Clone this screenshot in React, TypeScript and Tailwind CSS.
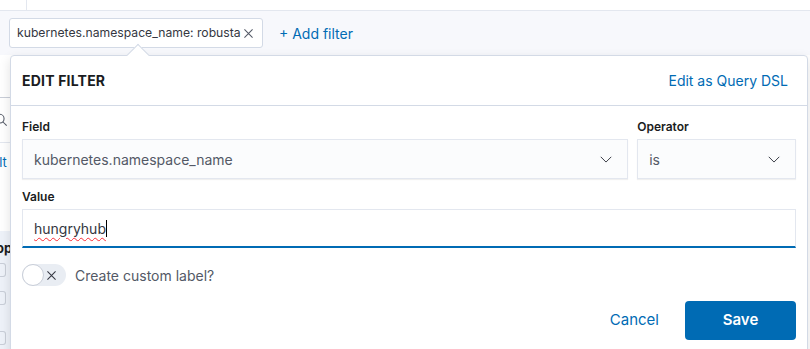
import React from "react";

const Chevron = () => (
  <svg width="14" height="14" viewBox="0 0 16 16" fill="none">
    <path d="M2 5.5l6 6 6-6" stroke="#343741" strokeWidth="1.1" />
  </svg>
);

const Cross = ({ size = 12, color = "#343741" }: { size?: number; color?: string }) => (
  <svg width={size} height={size} viewBox="0 0 16 16" fill="none">
    <path d="M3 3l10 10M13 3L3 13" stroke={color} strokeWidth="1.3" />
  </svg>
);

export default function App() {
  return (
    <div
      className="relative w-[810px] h-[349px] overflow-hidden bg-white text-[#343741]"
      style={{ fontFamily: "Inter, 'Noto Sans', sans-serif" }}
    >
      {/* top strip */}
      <div className="h-[11px] border-b border-[#e3e7ef] flex">
        <div className="w-[27px] border-r border-[#e3e7ef]" />
      </div>
      {/* filter bar */}
      <div className="h-[44px] bg-[#f7f8fc] flex items-center gap-[16px] pl-[9px]">
        <div className="h-[30px] w-[254px] bg-white border border-[#d3dae6] rounded-[3px] flex items-center pl-[7px] pr-[7px] justify-between text-[12.2px] text-[#343741] whitespace-nowrap">
          <span>kubernetes.namespace_name: robusta</span>
          <Cross size={13} color="#535966" />
        </div>
        <span className="text-[14px] text-[#006bb4]">+ Add filter</span>
      </div>
      {/* left sidebar remnants */}
      <div className="w-[10px] flex flex-col">
        <div className="h-[43px] border-b border-[#c9ced8]" />
        <div className="h-[45px] flex items-center border-b border-[#e3e7ef]">
          <svg width="14" height="14" viewBox="0 0 16 16" fill="none" className="-ml-[6px]">
            <circle cx="6.5" cy="6.5" r="5" stroke="#535966" strokeWidth="1.2" />
            <path d="M10 10l4.5 4.5" stroke="#535966" strokeWidth="1.2" />
          </svg>
        </div>
        <div className="h-[40px] flex items-center text-[13px] text-[#006bb4] overflow-hidden">
          <span className="-ml-[4px]">ilt</span>
        </div>
        <div className="h-[48px]" />
        <div className="h-[130px] bg-[#eef2f9] flex flex-col pt-[8px] overflow-hidden">
          <span className="text-[13px] font-bold -ml-[4px] text-[#1a1c21]">op</span>
          <div className="mt-[4px] h-[14px] w-[6px] border border-[#c9ced8] rounded-r-[3px] border-l-0" />
          <div className="mt-[14px] h-[14px] w-[6px] border border-[#c9ced8] rounded-r-[3px] border-l-0" />
          <div className="mt-[26px] h-[14px] w-[6px] border border-[#c9ced8] rounded-r-[3px] border-l-0" />
        </div>
      </div>

      {/* popover arrow */}
      <div className="absolute left-[130px] top-[47px] w-[16px] h-[16px] rotate-45 bg-white border-l border-t border-[#d3dae6] z-20" />
      {/* popover */}
      <div className="absolute left-[10px] top-[55px] w-[798px] h-[310px] bg-white border border-[#d3dae6] rounded-[4px] shadow-[0_4px_12px_rgba(0,0,0,0.12)] z-10">
        <div className="h-[50px] border-b border-[#d3dae6] flex items-center justify-between px-[11px]">
          <span className="text-[14px] font-bold tracking-[0.2px] text-[#1a1c21]">EDIT FILTER</span>
          <span className="text-[14px] text-[#006bb4] pr-[8px]">Edit as Query DSL</span>
        </div>
        <div className="px-[11px] pt-[12px]">
          <div className="flex gap-[9px]">
            <div className="flex flex-col w-[607px]">
              <span className="text-[12px] font-semibold h-[21px] text-[#1a1c21]">Field</span>
              <div className="h-[40px] bg-[#fbfcfd] border border-[#e3e7ef] shadow-[0_1px_1px_rgba(0,0,0,0.06)] flex items-center justify-between pl-[11px] pr-[14px] text-[14px] text-[#535966]">
                <span>kubernetes.namespace_name</span>
                <Chevron />
              </div>
            </div>
            <div className="flex flex-col w-[159px]">
              <span className="text-[12px] font-semibold h-[21px] text-[#1a1c21]">Operator</span>
              <div className="h-[40px] bg-[#fbfcfd] border border-[#e3e7ef] shadow-[0_1px_1px_rgba(0,0,0,0.06)] flex items-center justify-between pl-[11px] pr-[14px] text-[14px] text-[#535966]">
                <span>is</span>
                <Chevron />
              </div>
            </div>
          </div>
          <div className="flex flex-col mt-[9px]">
            <span className="text-[12px] font-semibold h-[21px] text-[#1a1c21]">Value</span>
            <div className="h-[39px] bg-white border border-[#e3e7ef] border-b-2 border-b-[#006bb4] flex items-center pl-[11px] text-[14px] text-[#343741]">
              <span className="underline decoration-wavy decoration-red-500 decoration-[1px] underline-offset-[3px]">hungryhub</span>
              <span className="w-px h-[17px] bg-black" />
            </div>
          </div>
          <div className="flex items-center gap-[9px] mt-[16px]">
            <div className="w-[44px] h-[22px] rounded-full bg-[#e9edf3] flex items-center justify-between pr-[8px]">
              <div className="w-[22px] h-[22px] rounded-full bg-white border border-[#c9ced8]" />
              <Cross size={13} color="#343741" />
            </div>
            <span className="text-[14px] text-[#535966]">Create custom label?</span>
          </div>
          <div className="flex justify-end items-center gap-[26px] mt-[15px]">
            <span className="text-[15px] text-[#006bb4]">Cancel</span>
            <div className="w-[111px] h-[39px] bg-[#006bb4] rounded-[4px] flex items-center justify-center text-white text-[15px] font-semibold">
              Save
            </div>
          </div>
        </div>
      </div>
    </div>
  );
}
